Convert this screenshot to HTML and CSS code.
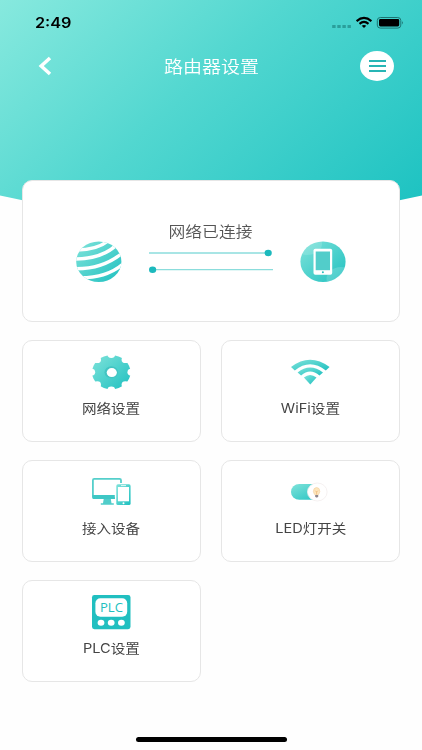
FILE: index.html
```
<!DOCTYPE html>
<html lang="zh-CN">
<head>
    <meta charset="utf-8">
    <link rel="stylesheet" href="styles.css">
    <title>路由器设置</title>
</head>
<body>
    <svg class="defs" width="0" height="0">
        <defs>
            <linearGradient id="teal" x1="0" y1="0" x2="1" y2="1">
                <stop offset="0" stop-color="#7fe3da"/>
                <stop offset="1" stop-color="#1fc0c0"/>
            </linearGradient>
        </defs>
    </svg>
    <div class="header">
        <div class="status">
            <span class="time">2:49</span>
            <svg class="signal" width="74" height="14" viewBox="0 0 74 14">
                <g fill="#2a9f9b">
                    <rect x="2.2" y="10" width="3.4" height="3"/>
                    <rect x="7.3" y="10" width="3.4" height="3"/>
                    <rect x="12.4" y="10" width="3.4" height="3"/>
                    <rect x="17.5" y="10" width="3.4" height="3"/>
                </g>
                <g fill="none" stroke="#000" stroke-width="2.1">
                    <path d="M26.6 6.1Q34 -0.3 41.4 6.1"/>
                    <path d="M29.5 8.9Q34 5 38.5 8.9"/>
                </g>
                <path d="M31.7 10.8Q34 9 36.3 10.8L34 13Z"/>
                <rect x="47.3" y="2.5" width="23.5" height="10.6" rx="3" fill="none" stroke="#1b7472"/>
                <rect x="49" y="4.1" width="20.2" height="7.4" rx="1.4"/>
                <path d="M72.2 6Q73.8 7.8 72.2 9.6Z" fill="#17605e"/>
            </svg>
        </div>
        <div class="nav">
            <svg class="back" width="14" height="20" viewBox="0 0 14 20">
                <path d="M12 2L3.2 10L12 18" fill="none" stroke="#fff" stroke-width="3.5"/>
            </svg>
            <h1><span class="wide">路由器设置</span></h1>
            <div class="menu"><i></i><i></i><i></i></div>
        </div>
    </div>

    <div class="container">
        <div class="card connection">
            <svg width="46" height="42" viewBox="0 0 46 42">
                <clipPath id="ball"><ellipse cx="22.8" cy="20.7" rx="22.6" ry="20.3"/></clipPath>
                <ellipse cx="22.8" cy="20.7" rx="22.6" ry="20.3" fill="url(#teal)"/>
                <g clip-path="url(#ball)" fill="none" stroke="#fff" stroke-width="3.5">
                    <path d="M0 9Q21 9 32 0"/>
                    <path d="M-1 18Q26 18 41 3.5"/>
                    <path d="M-1 27.8Q27 28.3 47 11.5"/>
                    <path d="M2 36.8Q30 37.5 47 23"/>
                </g>
            </svg>
            <div class="link">
                <p><span class="wide">网络已连接</span></p>
                <svg width="124" height="24" viewBox="0 0 124 24">
                    <g stroke="#8bdddc" stroke-width="1.4">
                        <path d="M0 4H119"/>
                        <path d="M3 20.6H124"/>
                    </g>
                    <ellipse cx="119.2" cy="4" rx="3.6" ry="3.2" fill="#1cb9bd"/>
                    <ellipse cx="3.6" cy="20.8" rx="3.6" ry="3.2" fill="#1cb9bd"/>
                </svg>
            </div>
            <svg width="46" height="42" viewBox="0 0 46 42">
                <clipPath id="disc"><ellipse cx="23" cy="20.7" rx="22.6" ry="20.3"/></clipPath>
                <g clip-path="url(#disc)">
                    <rect width="46" height="42" fill="url(#teal)"/>
                    <ellipse cx="7" cy="3" rx="15" ry="11" fill="#fff" opacity=".15"/>
                    <ellipse cx="41" cy="38" rx="14.5" ry="12" fill="#fff" opacity=".17"/>
                </g>
                <rect x="13.5" y="7.8" width="18.7" height="26" rx="1.8" fill="#fff"/>
                <rect x="15.7" y="10.5" width="14.3" height="18.7" fill="#52cdca"/>
                <circle cx="22.9" cy="31.3" r="1" fill="#24bebe"/>
            </svg>
        </div>

        <div class="grid">
            <div class="card tile">
                <svg width="46" height="40" viewBox="0 0 46 40">
                    <mask id="notch">
                        <rect width="46" height="40" fill="#fff"/>
                        <g transform="translate(23.3 20.2) scale(1.13 1)">
                            <circle cx="0" cy="-17.7" r="3.4"/>
                            <circle cx="12.5" cy="-12.5" r="3.4"/>
                            <circle cx="17.7" cy="0" r="3.4"/>
                            <circle cx="12.5" cy="12.5" r="3.4"/>
                            <circle cx="0" cy="17.7" r="3.4"/>
                            <circle cx="-12.5" cy="12.5" r="3.4"/>
                            <circle cx="-17.7" cy="0" r="3.4"/>
                            <circle cx="-12.5" cy="-12.5" r="3.4"/>
                        </g>
                    </mask>
                    <ellipse cx="23.3" cy="20.2" rx="19.2" ry="17" fill="url(#teal)" mask="url(#notch)"/>
                    <ellipse cx="23.3" cy="20.2" rx="6.8" ry="6" fill="#43c4c2"/>
                    <ellipse cx="23.8" cy="20.6" rx="5.1" ry="4.5" fill="#fff"/>
                </svg>
                <span class="label wide">网络设置</span>
            </div>
            <div class="card tile">
                <svg width="46" height="40" viewBox="0 0 46 40">
                    <g fill="url(#teal)">
                        <path d="M4 15Q23 0.5 42.6 15L38.8 18.4Q23 6 7.8 18.4Z"/>
                        <path d="M10.6 20.5Q23 10.5 36 20.5L32.5 23.4Q23 15.5 14.1 23.4Z"/>
                        <path d="M16.9 25.6Q23 20.4 29.5 25.6L23.3 32.5Z"/>
                    </g>
                </svg>
                <span class="label wide">WiFi设置</span>
            </div>
            <div class="card tile">
                <svg width="46" height="40" viewBox="0 0 46 40">
                    <path d="M33 11V8.3Q33 6.9 31.6 6.9H6.2Q4.9 6.9 4.9 8.3V24.8Q4.9 26.2 6 26.2H27" fill="none" stroke="#55cfcb" stroke-width="1.8"/>
                    <path d="M4.5 23H26.8V27H6Q4.5 27 4.5 25.5Z" fill="#3ec7c5"/>
                    <path d="M15.7 27H22.8L23.5 31.2H25.8V32.8H12.8V31.2H15Z" fill="#50cdca"/>
                    <rect x="28.3" y="12.3" width="14.3" height="20.7" rx="1.6" fill="url(#teal)"/>
                    <rect x="29.9" y="15" width="11.1" height="14.3" fill="#fff"/>
                    <path d="M33 13.6H38" stroke="#fff" stroke-width=".8"/>
                    <circle cx="35.5" cy="31.2" r="1" fill="#fff"/>
                </svg>
                <span class="label wide">接入设备</span>
            </div>
            <div class="card tile">
                <svg width="46" height="40" viewBox="0 0 46 40">
                    <rect x="4" y="12" width="34" height="15.8" rx="8.3" ry="7.9" fill="url(#teal)"/>
                    <ellipse cx="30.3" cy="20" rx="9.8" ry="9" fill="#fff" stroke="#f3eeee" stroke-width=".8"/>
                    <path d="M27.8 22.8Q26.7 21.2 26.4 19.5Q26.3 15.7 29.6 15.5Q32.9 15.7 32.8 19.5Q32.5 21.2 31.3 22.8Z" fill="#fde6bd" stroke="#f2ce9c" stroke-width=".6"/>
                    <path d="M28.3 18.7L29.6 20L30.9 18.7M29.6 20V22.6" fill="none" stroke="#e9ac66" stroke-width=".6"/>
                    <path d="M28.2 23H31.2V24.4L30.3 25.4H29L28.2 24.4Z" fill="#8d868c"/>
                </svg>
                <span class="label wide">LED灯开关</span>
            </div>
            <div class="card tile">
                <svg width="46" height="40" viewBox="0 0 46 40">
                    <rect x="4" y="3" width="38.5" height="34.2" rx="2.4" fill="#21bfc0"/>
                    <rect x="7.4" y="6.3" width="31.8" height="18.5" rx="5" fill="#fff"/>
                    <text class="plc" x="23.4" y="20.2" text-anchor="middle" textLength="23" lengthAdjust="spacingAndGlyphs">PLC</text>
                    <g fill="#fff">
                        <ellipse cx="13" cy="30.8" rx="3.4" ry="3"/>
                        <ellipse cx="23.2" cy="30.8" rx="3.4" ry="3"/>
                        <ellipse cx="33.4" cy="30.8" rx="3.4" ry="3"/>
                    </g>
                </svg>
                <span class="label wide">PLC设置</span>
            </div>
        </div>
    </div>
    <div class="home"></div>
</body>
</html>
```

FILE: styles.css
```
* {box-sizing: border-box;}
body {margin: 0; height: 750px; background-color: #fefefe; font-family: Inter, "Noto Sans CJK SC", sans-serif; display: flex; flex-direction: column; overflow: hidden;}
.defs {position: absolute;}
.wide {display: inline-block; transform: scaleX(1.12);}

.header {height: 240px; flex: none; background: linear-gradient(138deg, #87e9de 0%, #52d7d0 42%, #17c0c0 100%); clip-path: polygon(0 0, 100% 0, 100% 195.5px, 50% 240px, 0 195.5px);}
.status {height: 44px; padding: 15px 18px 0 35px; display: flex; justify-content: space-between;}
.time {font-size: 14px; line-height: 16px; font-weight: 600; transform: scaleX(1.16); transform-origin: left;}
.nav {height: 44px; padding: 0 28px 0 38px; display: flex; align-items: center; justify-content: space-between;}
.nav h1 {margin: 2px 0 0 10px; color: #fff; font-size: 17px; line-height: 24px; font-weight: 350;}
.menu {width: 34px; height: 30px; border-radius: 50%; background-color: #fff; display: flex; flex-direction: column; align-items: center; justify-content: center; gap: 3px;}
.menu i {width: 17px; height: 2px; background-color: #27b5b5;}

.container {padding: 0 22px; margin-top: -60px; position: relative;}
.card {background-color: #fff; border: 1px solid #e6e6e6; border-radius: 10px;}
.connection {height: 142px; padding: 0 53px; display: flex; justify-content: space-between; align-items: flex-start;}
.connection > svg {margin-top: 59.5px;}
.link {width: 124px; margin-top: 39px; text-align: center;}
.link p {margin: 0 0 5px; color: #555; font-size: 15px; line-height: 24px; font-weight: 350;}
.link svg {display: block;}

.grid {display: grid; grid-template-columns: 1fr 1fr; grid-auto-rows: 102px; gap: 18px 20px; margin-top: 18px;}
.tile {display: flex; flex-direction: column; align-items: center; padding-top: 11px;}
.tile svg {flex: none; margin-right: 2px;}
.label {margin-top: 6px; color: #444; font-size: 13px; line-height: 20px; font-weight: 400;}
.plc {font-family: "Open Sans", sans-serif; font-size: 12.5px; fill: #21bfc0;}

.home {width: 151px; height: 5px; border-radius: 3px; background-color: #000; margin: auto auto 8px;}
```
